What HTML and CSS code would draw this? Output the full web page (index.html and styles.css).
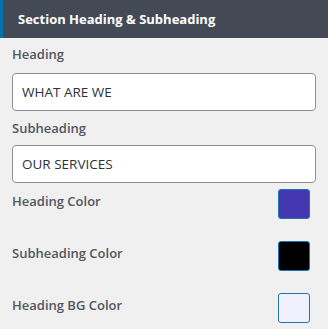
FILE: index.html
```html
<!DOCTYPE html>
<html>
<head>
<meta charset="utf-8">
<link rel="stylesheet" href="styles.css">
</head>
<body>
<div class="panel">
  <div class="panel-head">Section Heading &amp; Subheading</div>
  <div class="panel-body">
    <div class="field">
      <label class="label">Heading</label>
      <div class="input">WHAT ARE WE</div>
    </div>
    <div class="field field-second">
      <label class="label">Subheading</label>
      <div class="input">OUR SERVICES</div>
    </div>
    <div class="colors">
      <div class="color-row">
        <span class="label">Heading Color</span>
        <span class="swatch swatch-blue"></span>
      </div>
      <div class="color-row">
        <span class="label">Subheading Color</span>
        <span class="swatch swatch-black"></span>
      </div>
      <div class="color-row">
        <span class="label">Heading BG Color</span>
        <span class="swatch swatch-light"></span>
      </div>
    </div>
  </div>
</div>
</body>
</html>
```
FILE: styles.css
```css
html, body {
  margin: 0;
  padding: 0;
  background: #f0f0f0;
}
body {
  font-family: "Open Sans", "Noto Sans", sans-serif;
  width: 328px;
  height: 329px;
  overflow: hidden;
}
.panel-head {
  height: 38px;
  box-sizing: border-box;
  border-left: 3px solid #0073aa;
  background: #434a56;
  color: #ffffff;
  font-weight: 700;
  font-size: 13px;
  line-height: 38px;
  padding-left: 15px;
}
.panel-body {
  padding: 6px 12px 0 12px;
}
.label {
  display: block;
  font-size: 13px;
  line-height: 20px;
  color: #50575e;
  font-weight: 600;
}
.field .label {
  margin-bottom: 9px;
}
.field-second {
  margin-top: 7px;
}
.field-second .label {
  margin-bottom: 7px;
}
.input {
  height: 38px;
  box-sizing: border-box;
  border: 1px solid #8c8f94;
  border-radius: 4px;
  background: #ffffff;
  color: #2c3338;
  font-size: 13.5px;
  line-height: 36px;
  padding-left: 9px;
}
.colors {
  display: flex;
  flex-direction: column;
  gap: 22px;
  margin-top: 6px;
}
.color-row {
  display: flex;
  align-items: center;
  justify-content: space-between;
  height: 30px;
  padding-right: 6px;
}
.color-row .label {
  margin-top: -6px;
}
.swatch {
  width: 32px;
  height: 30px;
  box-sizing: border-box;
  border: 1px solid #2271b1;
  border-radius: 3px;
}
.swatch-blue { background: #4338b0; }
.swatch-black { background: #000000; }
.swatch-light { background: #f0f0ff; }
```
